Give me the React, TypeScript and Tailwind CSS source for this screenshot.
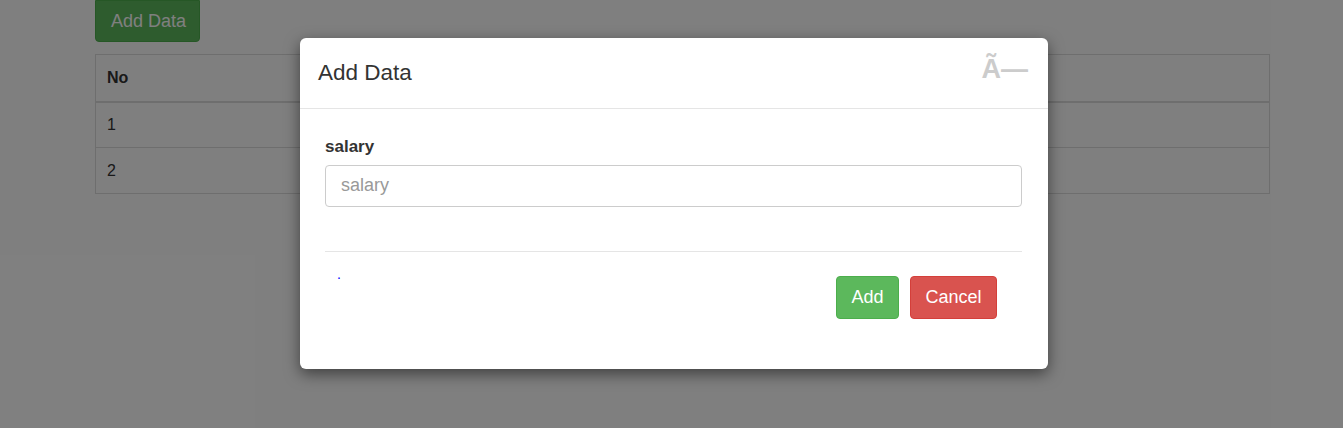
const rows = [{ no: 1 }, { no: 2 }];

export default function App() {
  return (
    <div className="relative min-h-[428px] bg-white font-['Liberation_Sans',Arial,sans-serif] text-[#333]">
      <div className="ml-[95px] w-[1175px]">
        <button className="h-[42px] w-[105px] rounded-b-[4px] border border-[#4cae4c] bg-[#5cb85c] pl-[2px] text-[18px] text-white">
          Add Data
        </button>
        <table className="mt-[12px] w-full border-collapse border border-[#ddd] text-[16px]">
          <thead>
            <tr className="h-[47px] border-b-2 border-[#ddd]">
              <th className="px-[11px] text-left font-bold">No</th>
            </tr>
          </thead>
          <tbody>
            {rows.map((r) => (
              <tr key={r.no} className="h-[46px] border-b border-[#ddd]">
                <td className="px-[11px]">{r.no}</td>
              </tr>
            ))}
          </tbody>
        </table>
      </div>

      <div className="absolute inset-0 bg-black/50" />

      <div className="absolute left-[300px] top-[38px] w-[748px] rounded-[6px] bg-white shadow-[0_5px_15px_rgba(0,0,0,0.5)]">
        <div className="flex h-[71px] items-center justify-between border-b border-[#e5e5e5] pl-[18px] pr-[20px]">
          <h4 className="text-[22.5px] font-normal text-[#333]">Add Data</h4>
          <span className="mt-[-8px] text-[27px] font-bold leading-none text-[#ccc]">Ã—</span>
        </div>
        <div className="px-[25px] pt-[25px]">
          <label className="block text-[17px] font-bold text-[#333]">salary</label>
          <input
            placeholder="salary"
            className="mt-[5px] h-[42px] w-[697px] rounded-[4px] border border-[#ccc] px-[15px] text-[18px] placeholder:text-[#999] focus:outline-none"
          />
          <div className="mt-[44px] w-[697px] border-t border-[#e5e5e5]" />
          <div className="flex justify-between pb-[50px] pt-[8px]">
            <span className="mt-[7px] pl-[12px] text-[14px] leading-none text-[#00f]">.</span>
            <div className="mr-[26px] mt-[16px] flex gap-[11px]">
              <button className="h-[43px] w-[63px] rounded-[4px] border border-[#4cae4c] bg-[#5cb85c] text-[18px] text-white">
                Add
              </button>
              <button className="h-[43px] w-[87px] rounded-[4px] border border-[#d43f3a] bg-[#d9534f] text-[18px] text-white">
                Cancel
              </button>
            </div>
          </div>
        </div>
      </div>
    </div>
  );
}
